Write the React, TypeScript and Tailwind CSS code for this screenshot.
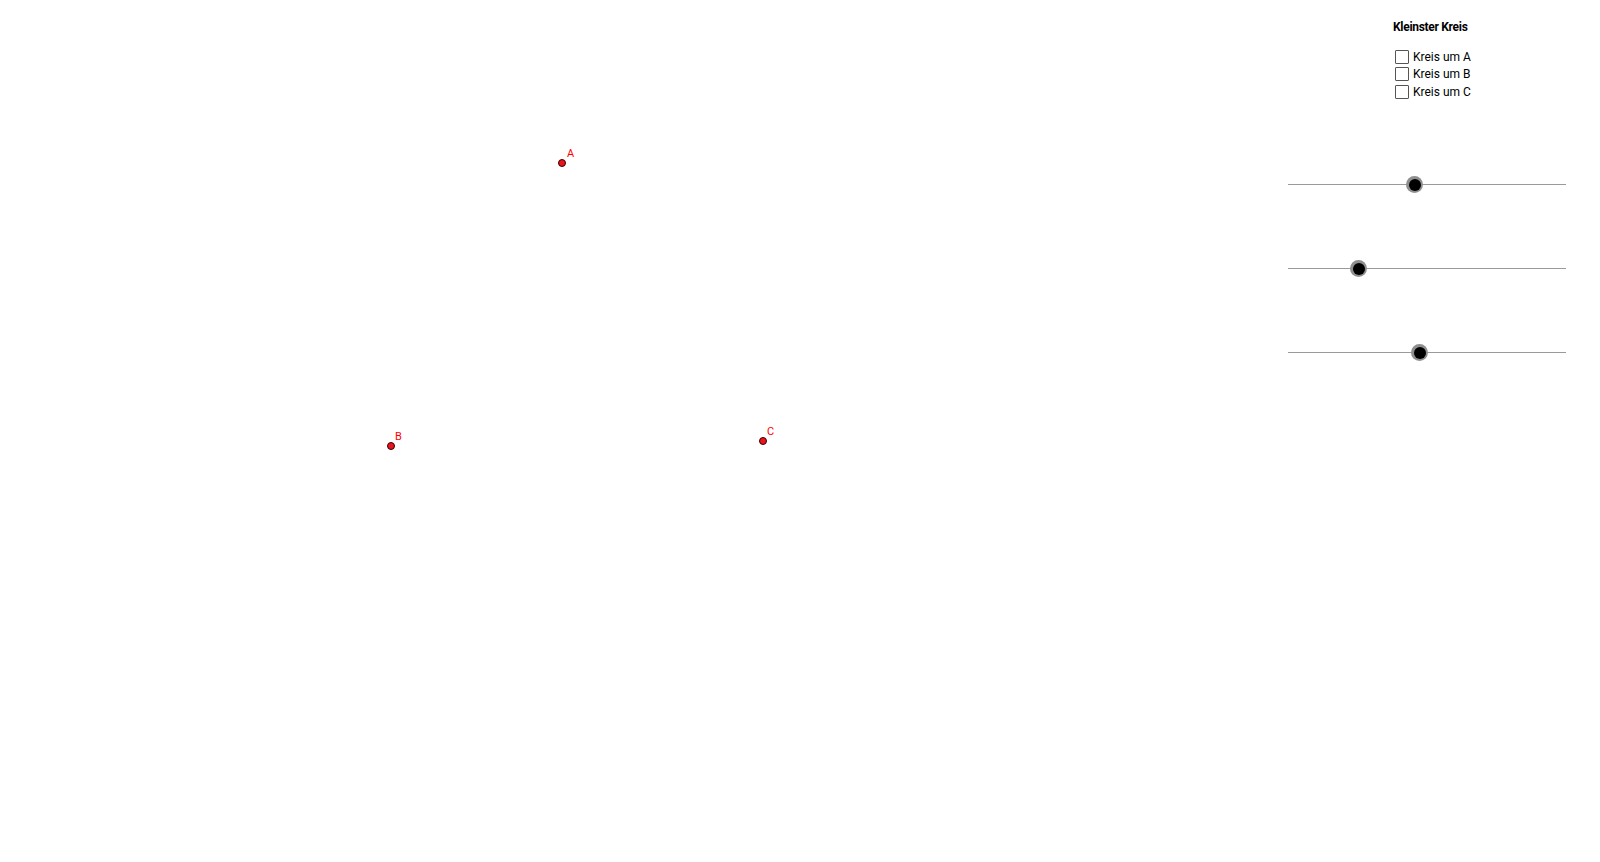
import React from 'react';

const points = [
  { name: 'A', x: 562, y: 163, lx: 567, ly: 147 },
  { name: 'B', x: 391, y: 446, lx: 395, ly: 430 },
  { name: 'C', x: 763, y: 441, lx: 767, ly: 425 },
];

const boxes = ['Kreis um A', 'Kreis um B', 'Kreis um C'];

// knob position in px from the left end of the 278px track
const sliders = [126, 70, 131];

export default function App() {
  return (
    <div className="flex h-[862px] w-[1600px] bg-white font-['Roboto',sans-serif] overflow-hidden">
      <div className="relative flex-1">
        {points.map((p) => (
          <React.Fragment key={p.name}>
            <div
              className="absolute h-[8px] w-[8px] rounded-full border border-[#3a0000] bg-[#e8141e]"
              style={{ left: p.x - 4, top: p.y - 4 }}
            />
            <span
              className="absolute text-[11px] leading-[14px] text-[#ff0000]"
              style={{ left: p.lx, top: p.ly }}
            >
              {p.name}
            </span>
          </React.Fragment>
        ))}
      </div>

      <div className="mr-[34px] flex w-[278px] flex-col">
        <div className="pt-[19px] pl-[105px] text-[12px] font-bold leading-[16px] tracking-[-0.3px] text-black">
          Kleinster Kreis
        </div>
        <div className="mt-[14px] flex flex-col pl-[107px]">
          {boxes.map((b, i) => (
            <label
              key={b}
              className={`flex items-center gap-[4px] text-[12px] leading-[16px] text-black ${i === 2 ? 'mt-[2px]' : ''} ${i === 1 ? 'mt-[1px]' : ''}`}
            >
              <span className="h-[14px] w-[14px] rounded-[1px] border border-[#555]" />
              {b}
            </label>
          ))}
        </div>
        <div className="mt-[84px] flex flex-col gap-[83px]">
          {sliders.map((s, i) => (
            <div key={i} className="relative h-px w-full bg-[#9a9a9a]">
              <div
                className="absolute top-[-8px] flex h-[17px] w-[17px] items-center justify-center rounded-full bg-[#8f8f8f]"
                style={{ left: s - 8 }}
              >
                <div className="h-[12px] w-[12px] rounded-full bg-black" />
              </div>
            </div>
          ))}
        </div>
      </div>
    </div>
  );
}
